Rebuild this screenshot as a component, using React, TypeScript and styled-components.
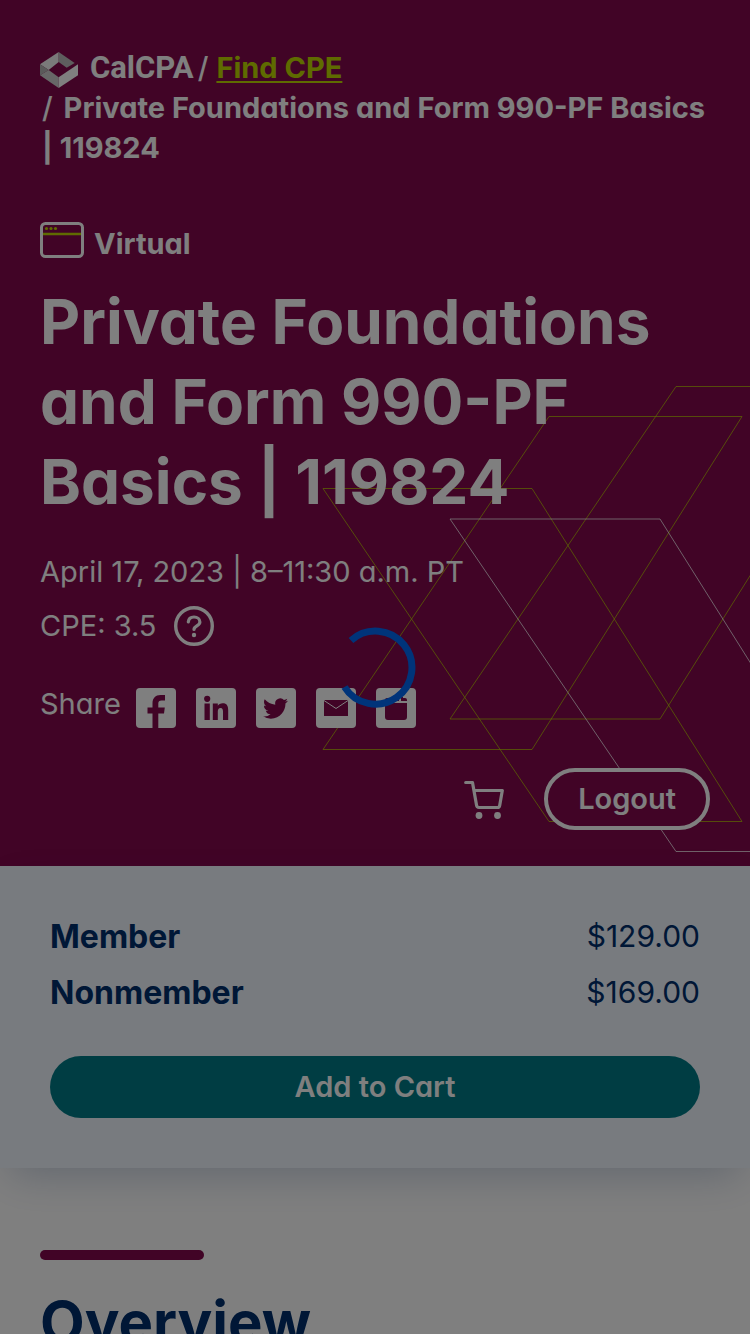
import React from "react";
import styled, { createGlobalStyle, css } from "styled-components";

const colors = {
  magenta: "#82084c",
  lime: "#bed600",
  navy: "#002f6c",
  teal: "#007b87",
  mist: "#f0f6fe",
  white: "#ffffff",
};

const GlobalStyle = createGlobalStyle`
  *, *::before, *::after { box-sizing: border-box; }
  html { overflow-x: hidden; }
  body {
    margin: 0;
    background: ${colors.white};
    color: ${colors.navy};
    font-family: Inter, "Liberation Sans", sans-serif;
    font-feature-settings: "cv11";
    font-size: 29px;
    line-height: 40px;
  }
`;

const Page = styled.div`
  height: 100vh;
  overflow: hidden;
`;

const Hero = styled.header`
  position: relative;
  overflow: hidden;
  padding: 48px 40px 36px;
  background: ${colors.magenta};
  color: ${colors.white};
`;

const Pattern = styled.svg`
  position: absolute;
  right: -120px;
  bottom: 13px;
  width: 548px;
  height: 468px;
  fill: none;
`;

const HeroContent = styled.div`
  position: relative;
`;

const Breadcrumb = styled.nav`
  font-weight: 700;
`;

const CrumbRow = styled.div`
  display: flex;
  align-items: center;
  gap: 4px;
`;

const Crumb = styled.div`
  padding-left: 2px;
`;

const Slash = styled.span`
  margin-right: 4px;
  font-weight: 500;
`;

const CrumbLink = styled.a`
  color: ${colors.lime};
  text-decoration-thickness: 2px;
  text-underline-offset: 3px;
`;

const Brand = styled.a`
  display: flex;
  align-items: flex-end;
  gap: 12px;
  color: inherit;
  text-decoration: none;
`;

const BrandName = styled.span`
  font-family: Roboto, "Liberation Sans", sans-serif;
  font-size: 31px;
`;

const Format = styled.div`
  display: flex;
  align-items: flex-start;
  gap: 10px;
  margin-top: 54px;
  font-weight: 700;
`;

const FormatName = styled.span`
  padding-top: 2px;
`;

const Title = styled.h1`
  margin: 18px 0 0;
  font-size: 62px;
  line-height: 80px;
  font-weight: 700;
`;

const Detail = styled.p`
  margin: 30px 0 0;
`;

const Row = styled.div<{ $gap: number; $top: number }>`
  display: flex;
  align-items: center;
  gap: ${(p) => p.$gap}px;
  margin-top: ${(p) => p.$top}px;
`;

const bareButton = css`
  padding: 0;
  border: 0;
  background: none;
  color: inherit;
  font: inherit;
  font-feature-settings: inherit;
  cursor: pointer;
`;

const IconButton = styled.button`
  ${bareButton}
  display: flex;
`;

const ShareRow = styled(Row)`
  align-items: flex-start;
`;

const ShareList = styled.div`
  display: flex;
  gap: 20px;
  padding-top: 4px;
`;

const ShareLink = styled.a`
  display: grid;
  place-items: center;
  width: 40px;
  height: 40px;
  border-radius: 4px;
  background: ${colors.white};
  color: ${colors.magenta};
`;

const Account = styled.div`
  display: flex;
  align-items: center;
  justify-content: flex-end;
  gap: 40px;
  margin-top: 40px;
`;

const LogoutButton = styled.button`
  ${bareButton}
  height: 62px;
  padding: 0 30px;
  border: 4px solid ${colors.white};
  border-radius: 31px;
  background: ${colors.magenta};
  font-weight: 600;
`;

const Pricing = styled.section`
  position: relative;
  padding: 42px 50px 50px;
  background: ${colors.mist};
  box-shadow: 0 16px 40px -10px rgba(0, 47, 108, 0.24);
`;

const Prices = styled.dl`
  margin: 0;
`;

const PriceRow = styled.div`
  display: flex;
  justify-content: space-between;
  align-items: center;
  height: 56px;
`;

const PriceLabel = styled.dt`
  padding-top: 2px;
  font-size: 32px;
  font-weight: 700;
`;

const PriceAmount = styled.dd`
  margin: 0;
  font-size: 30px;
`;

const AddButton = styled.button`
  ${bareButton}
  display: block;
  width: 100%;
  height: 62px;
  margin-top: 36px;
  border-radius: 31px;
  background: ${colors.teal};
  color: ${colors.white};
  font-weight: 600;
`;

const Overview = styled.section`
  padding: 82px 40px 40px;
`;

const Accent = styled.div`
  width: 164px;
  height: 10px;
  border-radius: 5px;
  background: ${colors.magenta};
`;

const SectionTitle = styled.h2`
  margin: 22px 0 0;
  font-size: 58px;
  line-height: 80px;
  font-weight: 700;
`;

const Overlay = styled.div`
  position: fixed;
  inset: 0;
  display: grid;
  place-items: center;
  background: rgba(0, 0, 0, 0.5);
`;

const LogoMark = () => (
  <svg width="38" height="36" viewBox="0 0 114 108" aria-hidden="true">
    <path d="M0 37 56 0v30L26 54z" fill="#f4f4f4" />
    <path d="M56 0 104 33 80 47 56 30z" fill="#bdbdbd" />
    <path d="M0 37 26 54 0 70z" fill="#b4b4b4" />
    <path d="M0 70 26 54 56 76v32z" fill="#cfcfcf" />
    <path d="M56 76 114 37v33L56 108z" fill="#fff" />
  </svg>
);

const WindowIcon = () => (
  <svg width="44" height="36" viewBox="0 0 44 36" fill="none" aria-hidden="true">
    <path d="M3 12h38" stroke={colors.lime} strokeWidth="2.6" />
    <rect x="1.5" y="1.5" width="41" height="33" rx="4" stroke="#fff" strokeWidth="3" />
    <g fill={colors.lime}>
      <circle cx="6.5" cy="6.5" r="1.6" />
      <circle cx="11" cy="6.5" r="1.6" />
      <circle cx="15.5" cy="6.5" r="1.6" />
    </g>
  </svg>
);

const HelpIcon = () => (
  <svg width="40" height="40" viewBox="0 0 40 40" fill="none" stroke="#fff" strokeLinecap="round" aria-hidden="true">
    <circle cx="20" cy="20" r="18.3" strokeWidth="3.4" />
    <path d="M14.300 16c.3-3.200 2.600-5 5.700-5 3.400 0 5.900 2 5.900 5 0 4-5.900 3.800-5.900 7.500" strokeWidth="3.200" />
    <circle cx="20" cy="29" r="2.200" fill="#fff" stroke="none" />
  </svg>
);

const FacebookIcon = () => (
  <svg width="40" height="40" viewBox="0 0 40 40" fill="currentColor" aria-hidden="true">
    <path d="M16.500 40V25.500h-5V19.500h5V15.500C16.500 10 19.500 7 24.500 7H29v5.500h-3.500c-2.300 0-3.200 1-3.200 3v4h6.500l-.8 6H22.300V40z" />
  </svg>
);

const LinkedInIcon = () => (
  <svg width="40" height="40" viewBox="0 0 40 40" fill="currentColor" aria-hidden="true">
    <circle cx="11.200" cy="10.800" r="3.100" />
    <path d="M8.500 15.500h5.300V32H8.500zM16.800 15.500h5v2.300c.9-1.600 2.600-2.600 4.900-2.600 4.300 0 5.500 2.700 5.500 7V32h-5.200v-8.400c0-2.200-.6-3.700-2.400-3.700-2 0-2.800 1.500-2.800 3.700V32h-5z" />
  </svg>
);

const TwitterIcon = () => (
  <svg width="25" height="25" viewBox="0 0 24 24" fill="currentColor" aria-hidden="true">
    <path d="M23.950 4.570a10 10 0 0 1-2.820.770 4.960 4.960 0 0 0 2.160-2.720c-.950.550-2 .950-3.130 1.180a4.920 4.920 0 0 0-8.380 4.480C7.690 8.100 4.070 6.130 1.640 3.160a4.820 4.820 0 0 0-.670 2.480c0 1.710.870 3.210 2.190 4.100a4.900 4.900 0 0 1-2.230-.620v.060a4.920 4.920 0 0 0 3.950 4.830 5 5 0 0 1-2.210.080 4.940 4.940 0 0 0 4.600 3.420A9.870 9.870 0 0 1 0 19.540a14 14 0 0 0 7.550 2.210c9.050 0 14-7.500 14-13.980 0-.210 0-.420-.020-.630a9.940 9.940 0 0 0 2.460-2.550z" />
  </svg>
);

const MailIcon = () => (
  <svg width="24" height="16" viewBox="0 0 24 16" aria-hidden="true">
    <path d="M0 0h24v16H0z" fill="currentColor" />
    <path d="M0 .5 12 8.500 24 .5" fill="none" stroke="#fff" strokeWidth="1" />
  </svg>
);

const CalendarIcon = () => (
  <svg width="22" height="24" viewBox="0 0 22 24" fill="currentColor" aria-hidden="true">
    <path d="M0 7h22v14a3 3 0 0 1-3 3H3a3 3 0 0 1-3-3zM0 5V4a2 2 0 0 1 2-2h2v3h2V1h2v1h6v3h2V1h2v1h2a2 2 0 0 1 2 2v1z" />
  </svg>
);

const CartIcon = () => (
  <svg width="40" height="40" viewBox="0 0 40 40" fill="none" stroke="#fff" strokeWidth="3.200" strokeLinecap="round" strokeLinejoin="round" aria-hidden="true">
    <path d="M1.700 3.500H8.500L12.500 26c.3 1.800 1.200 2.500 2.500 2.500H33.500c1.300 0 2-.8 2.200-2L38.300 11.500H10" />
    <circle cx="15" cy="36.500" r="3.400" fill="#fff" stroke="none" />
    <circle cx="33.500" cy="36.500" r="3.400" fill="#fff" stroke="none" />
  </svg>
);

const shares = [
  { label: "Facebook", icon: <FacebookIcon /> },
  { label: "LinkedIn", icon: <LinkedInIcon /> },
  { label: "Twitter", icon: <TwitterIcon /> },
  { label: "Email", icon: <MailIcon /> },
  { label: "Calendar", icon: <CalendarIcon /> },
];

const prices = [
  { label: "Member", amount: "$129.00" },
  { label: "Nonmember", amount: "$169.00" },
];

export default function App() {
  return (
    <Page>
      <GlobalStyle />
      <Hero>
        <Pattern viewBox="322 385 548 468" aria-hidden="true">
          <g stroke={colors.lime} strokeOpacity="0.7">
            <path d="M323 488.500H532L742 821.500H549z" />
            <path d="M549 416.500H742L532 749.500H323z" />
            <path d="M676 386.500H869L660 719H450z" />
          </g>
          <path d="M450 519H660L869 851.500H676z" stroke="#fff" strokeOpacity="0.75" />
        </Pattern>
        <HeroContent>
          <Breadcrumb aria-label="Breadcrumb">
            <CrumbRow>
              <Brand href="#"><LogoMark /><BrandName>CalCPA</BrandName></Brand>
              <Slash>/</Slash>
              <CrumbLink href="#">Find CPE</CrumbLink>
            </CrumbRow>
            <Crumb><Slash>/</Slash> Private Foundations and Form 990-PF Basics | 119824</Crumb>
          </Breadcrumb>
          <Format><WindowIcon /><FormatName>Virtual</FormatName></Format>
          <Title>Private Foundations and Form 990-PF Basics | 119824</Title>
          <Detail>April 17, 2023 | 8–11:30 a.m. PT</Detail>
          <Row $gap={18} $top={14}>
            <span>CPE: 3.5</span>
            <IconButton type="button" aria-label="About CPE credits"><HelpIcon /></IconButton>
          </Row>
          <ShareRow $gap={15} $top={38}>
            <span>Share</span>
            <ShareList>
              {shares.map((s) => (
                <ShareLink key={s.label} href="#" aria-label={s.label}>{s.icon}</ShareLink>
              ))}
            </ShareList>
          </ShareRow>
          <Account>
            <IconButton type="button" aria-label="Cart"><CartIcon /></IconButton>
            <LogoutButton type="button">Logout</LogoutButton>
          </Account>
        </HeroContent>
      </Hero>
      <Pricing>
        <Prices>
          {prices.map((p) => (
            <PriceRow key={p.label}>
              <PriceLabel>{p.label}</PriceLabel>
              <PriceAmount>{p.amount}</PriceAmount>
            </PriceRow>
          ))}
        </Prices>
        <AddButton type="button">Add to Cart</AddButton>
      </Pricing>
      <Overview>
        <Accent />
        <SectionTitle>Overview</SectionTitle>
      </Overview>
      <Overlay role="status" aria-label="Loading">
        <svg width="82" height="82" viewBox="0 0 82 82" fill="none" aria-hidden="true">
          <path d="M17 14.500A36.500 36.500 0 1 1 10.500 61" stroke="#00347a" strokeWidth="7" />
        </svg>
      </Overlay>
    </Page>
  );
}
